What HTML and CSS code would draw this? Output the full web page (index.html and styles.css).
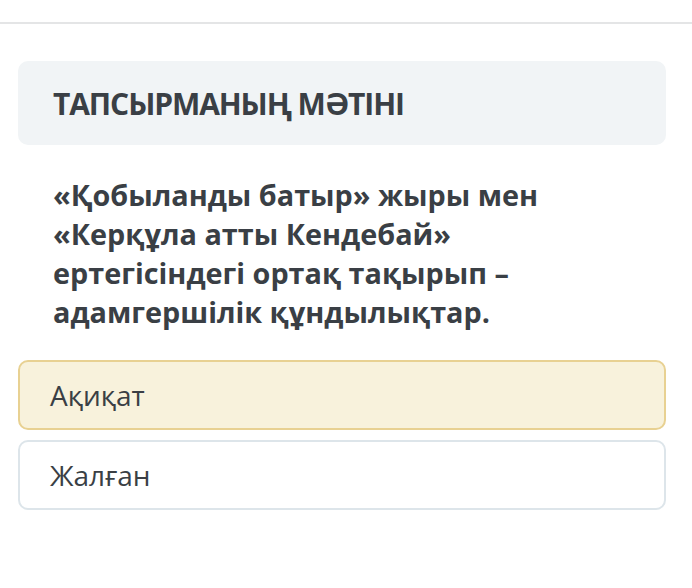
FILE: index.html
```html
<html>
<head>
    <title>Тапсырма</title>
    <meta http-equiv="content-type" content="text/html; charset=UTF-8">
    <link rel="stylesheet" href="styles.css">
</head>
<body>
    <div class="topbar"></div>
    <div id="container">
        <div class="task-head">ТАПСЫРМАНЫҢ МӘТІНІ</div>
        <div class="question">«Қобыланды батыр» жыры мен «Керқұла атты Кендебай» ертегісіндегі ортақ тақырып – адамгершілік құндылықтар.</div>
        <div class="answer selected">Ақиқат</div>
        <div class="answer">Жалған</div>
    </div>
</body>
</html>
```
FILE: styles.css
```css
body {
    margin: 0;
    font-family: 'Open Sans', 'Noto Sans', sans-serif;
    color: #3a3f45;
    background: #fff;
}

.topbar {
    height: 22px;
    border-bottom: 2px solid #e4e5e6;
}

#container {
    width: 648px;
    margin-left: 18px;
    padding-top: 37px;
}

.task-head {
    background: #f1f4f6;
    border-radius: 10px;
    height: 84px;
    line-height: 86px;
    padding-left: 35px;
    font-size: 30px;
    font-weight: 700;
    letter-spacing: -1.1px;
}

.question {
    padding: 30px 40px 29px 35px;
    font-size: 28.8px;
    font-weight: 700;
    line-height: 39px;
}

.answer {
    height: 66px;
    line-height: 66px;
    padding-left: 30px;
    border: 2px solid #dde5ea;
    border-radius: 10px;
    font-size: 28px;
    margin-bottom: 10px;
}

.answer.selected {
    background: #f8f2dc;
    border-color: #e8d192;
}
```
